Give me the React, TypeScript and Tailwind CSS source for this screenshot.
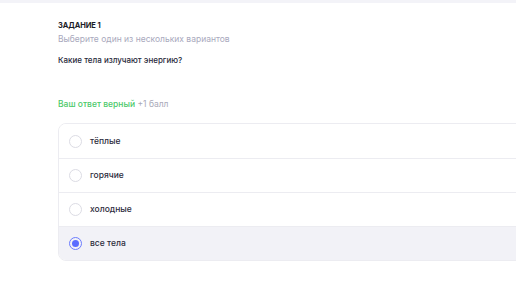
const options = [
  { id: 1, label: 'тёплые' },
  { id: 2, label: 'горячие' },
  { id: 3, label: 'холодные' },
  { id: 4, label: 'все тела' },
];

export default function App() {
  const selected = 4;

  return (
    <div className="w-[516px] h-[290px] bg-white overflow-hidden font-['Inter',sans-serif]">
      <div className="h-[3px] bg-[#f3f3f8]" />
      <div className="pl-[58px] pt-[17px]">
        <div className="text-[7.5px] font-bold text-[#1c1c28] leading-[11px] tracking-[-0.1px]">ЗАДАНИЕ 1</div>
        <div className="mt-[1px] text-[8.5px] text-[#a9a9bd] leading-[14px]">Выберите один из нескольких вариантов</div>
        <div className="mt-[7px] text-[8px] font-medium text-[#28283a] leading-[14px]">Какие тела излучают энергию?</div>
        <div className="mt-[30px] text-[8.5px] leading-[14px]">
          <span className="text-[#4cc96a] font-medium">Ваш ответ верный</span>{' '}
          <span className="text-[#a9a9b8]">+1 балл</span>
        </div>
        <div className="mt-[12px] w-[520px] border border-[#ececf1] rounded-[8px] overflow-hidden">
          {options.map((o, i) => (
            <div
              key={o.id}
              className={`h-[34px] flex items-center pl-[10px] gap-[8px] ${i > 0 ? 'border-t border-[#ececf1]' : ''} ${o.id === selected ? 'bg-[#f2f2f7]' : 'bg-white'}`}
            >
              {o.id === selected ? (
                <span className="w-[13px] h-[13px] rounded-full border-[1.5px] border-[#6b7cff] flex items-center justify-center">
                  <span className="w-[7px] h-[7px] rounded-full bg-[#5a6cff]" />
                </span>
              ) : (
                <span className="w-[13px] h-[13px] rounded-full border border-[#dcdce4] bg-white" />
              )}
              <span className="text-[8.5px] font-medium text-[#2c2c3c]">{o.label}</span>
            </div>
          ))}
        </div>
      </div>
    </div>
  );
}
